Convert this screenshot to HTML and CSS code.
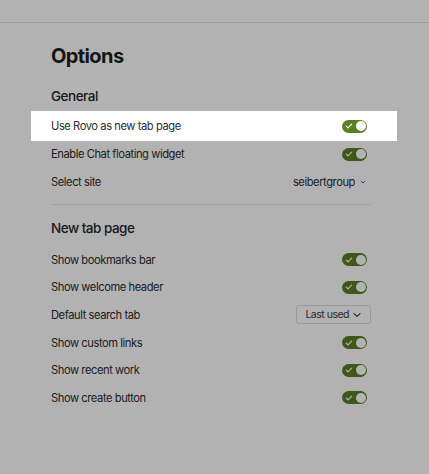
FILE: index.html
```html
<!DOCTYPE html>
<html lang="en">
<head>
<meta charset="utf-8">
<title>Options</title>
<link rel="stylesheet" href="styles.css">
</head>
<body>
<header class="topbar"></header>
<main class="page">
  <h1 class="title">Options</h1>

  <section class="section">
    <h2 class="section-title">General</h2>
    <div class="row row-spotlight">
      <span class="label">Use Rovo as new tab page</span>
      <span class="toggle"><svg class="check" viewBox="0 0 8 8"><path d="M1.3 4.2 L3.1 5.9 L6.6 2.2" /></svg><span class="knob"></span></span>
    </div>
    <div class="row">
      <span class="label">Enable Chat floating widget</span>
      <span class="toggle"><svg class="check" viewBox="0 0 8 8"><path d="M1.3 4.2 L3.1 5.9 L6.6 2.2" /></svg><span class="knob"></span></span>
    </div>
    <div class="row">
      <span class="label">Select site</span>
      <span class="site">seibertgroup <svg class="chev-sm" viewBox="0 0 8 8"><path d="M1.8 3 L4 5 L6.2 3" /></svg></span>
    </div>
  </section>

  <hr class="divider">

  <section class="section">
    <h2 class="section-title section-title-2">New tab page</h2>
    <div class="row row-b">
      <span class="label">Show bookmarks bar</span>
      <span class="toggle"><svg class="check" viewBox="0 0 8 8"><path d="M1.3 4.2 L3.1 5.9 L6.6 2.2" /></svg><span class="knob"></span></span>
    </div>
    <div class="row row-b">
      <span class="label">Show welcome header</span>
      <span class="toggle"><svg class="check" viewBox="0 0 8 8"><path d="M1.3 4.2 L3.1 5.9 L6.6 2.2" /></svg><span class="knob"></span></span>
    </div>
    <div class="row row-b">
      <span class="label">Default search tab</span>
      <span class="select">Last used <svg class="chev" viewBox="0 0 10 10"><path d="M2 3.6 L5 6.4 L8 3.6" /></svg></span>
    </div>
    <div class="row row-b">
      <span class="label">Show custom links</span>
      <span class="toggle"><svg class="check" viewBox="0 0 8 8"><path d="M1.3 4.2 L3.1 5.9 L6.6 2.2" /></svg><span class="knob"></span></span>
    </div>
    <div class="row row-b">
      <span class="label">Show recent work</span>
      <span class="toggle"><svg class="check" viewBox="0 0 8 8"><path d="M1.3 4.2 L3.1 5.9 L6.6 2.2" /></svg><span class="knob"></span></span>
    </div>
    <div class="row row-b">
      <span class="label">Show create button</span>
      <span class="toggle"><svg class="check" viewBox="0 0 8 8"><path d="M1.3 4.2 L3.1 5.9 L6.6 2.2" /></svg><span class="knob"></span></span>
    </div>
  </section>
</main>
</body>
</html>
```

FILE: styles.css
```css
* { box-sizing: border-box; }

html, body {
  margin: 0;
  padding: 0;
  background: #ffffff;
  height: 100%;
  overflow: hidden;
}

body {
  font-family: Inter, "Noto Sans", sans-serif;
  color: #2c2c2e;
}

.topbar {
  height: 23px;
  border-bottom: 1px solid #e2e2e2;
}

.page {
  width: 320px;
  margin-left: 51px;
  padding-top: 19px;
}

.title {
  margin: 0;
  font-size: 20px;
  line-height: 28px;
  font-weight: 700;
  color: #1f1f21;
  letter-spacing: -0.6px;
}

.section {
  display: flex;
  flex-direction: column;
}

.section-title {
  margin: 16px 0 6px;
  font-size: 13.5px;
  line-height: 20px;
  font-weight: 500;
  color: #27272a;
  letter-spacing: -0.5px;
}

.section-title-2 {
  margin: 13px 0 8px;
}

.row {
  display: flex;
  align-items: center;
  justify-content: space-between;
  height: 28px;
  padding-right: 4px;
}

.row-b { height: 27.6px; }

.row-spotlight {
  position: relative;
  z-index: 1;
  height: 30px;
  margin: -1px -26px -1px -20px;
  padding: 0 30px 0 20px;
  background: #ffffff;
  box-shadow: 0 0 0 2000px rgba(0, 0, 0, 0.3);
}

.label {
  font-size: 11.2px;
  line-height: 14px;
  color: #2e2e30;
  letter-spacing: -0.45px;
}

.toggle {
  position: relative;
  display: inline-flex;
  align-items: center;
  width: 25px;
  height: 13px;
  border-radius: 7px;
  background: #5b7f24;
}

.check {
  width: 8px;
  height: 8px;
  margin-left: 3px;
  fill: none;
  stroke: #ffffff;
  stroke-width: 1.2;
  stroke-linecap: round;
  stroke-linejoin: round;
}

.knob {
  position: absolute;
  right: 1.5px;
  top: 1.5px;
  width: 10px;
  height: 10px;
  border-radius: 50%;
  background: #ffffff;
}

.site {
  display: inline-flex;
  align-items: center;
  gap: 4px;
  font-size: 11.2px;
  color: #2e2e30;
  letter-spacing: -0.45px;
}

.chev-sm {
  width: 8px;
  height: 8px;
  fill: none;
  stroke: #6b6b70;
  stroke-width: 1;
}

.select {
  display: inline-flex;
  align-items: center;
  gap: 3px;
  height: 19px;
  padding: 0 8px 0 8px;
  margin-right: -4px;
  border: 1px solid #dcdcdf;
  border-radius: 3px;
  font-size: 10.5px;
  color: #3a3a3d;
  letter-spacing: -0.5px;
}

.chev {
  width: 10px;
  height: 10px;
  fill: none;
  stroke: #3a3a3d;
  stroke-width: 1.2;
  stroke-linecap: round;
  stroke-linejoin: round;
}

.divider {
  margin: 8px 0 0;
  border: 0;
  border-top: 1px solid #e4e4e6;
  height: 0;
}
```
